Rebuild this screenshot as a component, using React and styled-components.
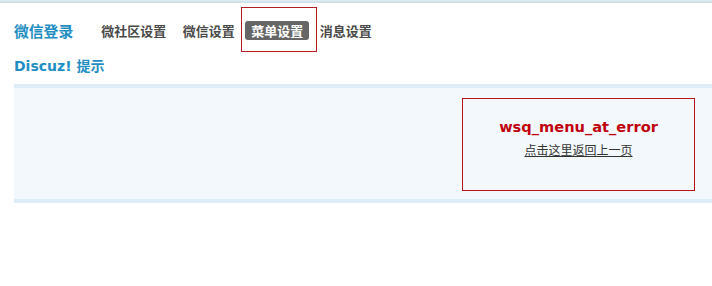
import styled, { createGlobalStyle } from "styled-components";

const GlobalStyle = createGlobalStyle`
  html, body {
    margin: 0;
    padding: 0;
    background: #fff;
    font-family: "DejaVu Sans", "Noto Sans CJK SC", sans-serif;
  }
`;

const App = () => {
  return (
    <Page>
      <GlobalStyle />
      <TopLine />
      <Main>
        <Header>
          <Brand>微信登录</Brand>
          <Nav>
            <NavItem>微社区设置</NavItem>
            <NavItem>微信设置</NavItem>
            <NavItem active>菜单设置</NavItem>
            <NavItem>消息设置</NavItem>
          </Nav>
        </Header>
        <Title>Discuz! 提示</Title>
        <Panel>
          <Alert>
            <AlertTitle>wsq_menu_at_error</AlertTitle>
            <BackLink href="#">点击这里返回上一页</BackLink>
          </Alert>
        </Panel>
      </Main>
    </Page>
  );
};

const Page = styled.div`
  width: 712px;
  height: 286px;
  overflow: hidden;
`;

const TopLine = styled.div`
  height: 3px;
  background: linear-gradient(#e4eef4, #c9dce7);
`;

const Main = styled.div`
  padding-left: 14px;
`;

const Header = styled.div`
  display: flex;
  align-items: center;
  height: 40px;
  margin-top: 7px;
`;

const Brand = styled.h2`
  margin: 0 22px 0 0;
  font-family: "Noto Sans CJK SC", sans-serif;
  font-size: 14.8px;
  font-weight: 700;
  color: #1f8ec3;
`;

const Nav = styled.div`
  display: flex;
  align-items: center;
  gap: 4.5px;
`;

const NavItem = styled.span`
  position: relative;
  padding: 0 6px;
  height: 19px;
  line-height: 19px;
  border-radius: 3px;
  font-family: "Noto Sans CJK SC", sans-serif;
  font-size: 13px;
  font-weight: 700;
  color: ${(p) => (p.active ? "#fff" : "#4a4a4a")};
  background: ${(p) => (p.active ? "#666" : "transparent")};

  ${(p) =>
    p.active &&
    `
    &::after {
      content: "";
      position: absolute;
      top: -14px;
      left: -4px;
      right: -8px;
      bottom: -12px;
      border: 1px solid #b21c24;
    }
  `}
`;

const Title = styled.h3`
  margin: 7px 0 0;
  height: 18px;
  line-height: 18px;
  font-size: 14px;
  font-weight: 700;
  color: #1f8ec3;
  font-family: "DejaVu Sans", "Noto Sans CJK SC", sans-serif;
`;

const Panel = styled.div`
  margin-top: 9px;
  display: flex;
  justify-content: flex-end;
  padding: 10px 17px 8px 0;
  background: #f2f8fc;
  border-top: 4px solid #deecf5;
  border-bottom: 4px solid #deecf5;
`;

const Alert = styled.div`
  box-sizing: border-box;
  width: 233px;
  height: 93px;
  border: 1px solid #b8141c;
  display: flex;
  flex-direction: column;
  align-items: center;
  padding-top: 19px;
`;

const AlertTitle = styled.div`
  font-size: 14.6px;
  font-weight: 700;
  color: #c0000c;
  line-height: 18px;
`;

const BackLink = styled.a`
  margin-top: 6px;
  font-family: "Noto Sans CJK SC", sans-serif;
  font-size: 12px;
  line-height: 16px;
  color: #333;
  text-decoration: underline;
`;

export default App;
